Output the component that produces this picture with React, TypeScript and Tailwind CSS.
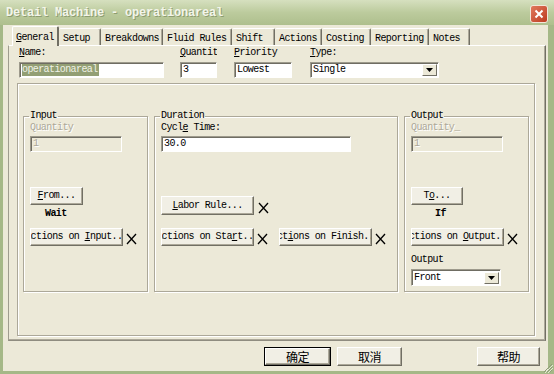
import React from "react";

const mono = "font-['Liberation_Mono',monospace] text-[10px] tracking-[-0.6px] leading-[12px]";
const cjk = "font-['Noto_Sans_CJK_SC',sans-serif] text-[12px]";

const tabs = [
  { label: "General", w: "w-[47px]", u: 0, active: true },
  { label: "Setup", w: "w-[42px]", u: 0 },
  { label: "Breakdowns", w: "w-[62px]", u: 0 },
  { label: "Fluid Rules", w: "w-[69px]", u: 0 },
  { label: "Shift", w: "w-[43px]", u: 2 },
  { label: "Actions", w: "w-[47px]", u: 0 },
  { label: "Costing", w: "w-[49px]", u: 0 },
  { label: "Reporting", w: "w-[58px]", u: 0 },
  { label: "Notes", w: "w-[41px]", u: 0 },
];

function Ul({ text, at }: { text: string; at: number }) {
  return (
    <>
      {text.slice(0, at)}
      <span className="underline underline-offset-[1px]">{text[at]}</span>
      {text.slice(at + 1)}
    </>
  );
}

function Field({
  className,
  children,
  disabled,
}: {
  className: string;
  children?: React.ReactNode;
  disabled?: boolean;
}) {
  return (
    <div
      className={`h-[16px] flex items-center pl-[2px] border border-t-[#9d9a8c] border-l-[#9d9a8c] border-b-white border-r-white shadow-[inset_1px_1px_0_#6f6d63] overflow-hidden ${
        disabled ? "bg-[#ece9d8] text-[#aca899]" : "bg-white text-black"
      } ${className}`}
    >
      {children}
    </div>
  );
}

function Select({ className, value }: { className: string; value: string }) {
  return (
    <Field className={`pr-[1px] ${className}`}>
      <span className="flex-1">{value}</span>
      <div className="w-[15px] h-[12px] flex items-center justify-center bg-[#ece9d8] border border-t-white border-l-white border-b-[#716f64] border-r-[#716f64]">
        <svg width="7" height="4" viewBox="0 0 7 4">
          <path d="M0 0h7L3.5 4z" fill="#000" />
        </svg>
      </div>
    </Field>
  );
}

function Btn({
  className,
  children,
}: {
  className: string;
  children: React.ReactNode;
}) {
  return (
    <div
      className={`flex items-center justify-center whitespace-nowrap overflow-hidden bg-[#f1efe5] border border-t-white border-l-white border-b-[#716f64] border-r-[#716f64] shadow-[inset_-1px_-1px_0_#aca899] ${className}`}
    >
      <span className="whitespace-pre">{children}</span>
    </div>
  );
}

function XMark() {
  return (
    <svg width="11" height="12" viewBox="0 0 11 12" className="mb-[1px]">
      <path d="M1 1l9 10M10 1L1 11" stroke="#000" strokeWidth="1.3" />
    </svg>
  );
}

function Group({
  title,
  className,
  children,
}: {
  title: string;
  className: string;
  children: React.ReactNode;
}) {
  return (
    <fieldset
      className={`h-[182px] border border-[#aca899] shadow-[1px_1px_0_#fff,inset_1px_1px_0_#fff] pl-[6px] ${className}`}
    >
      <legend className="px-[1px] -ml-[1px] text-black">{title}</legend>
      <div className="flex flex-col items-start">{children}</div>
    </fieldset>
  );
}

const dis = "text-[#aca899] [text-shadow:1px_1px_0_#fff]";

export default function App() {
  return (
    <div className={`relative w-[554px] h-[374px] flex flex-col bg-[#a5b887] ${mono}`}>
      {/* title bar */}
      <div className="h-[25px] flex items-center pl-[6px] pr-[6px] bg-linear-to-b from-[#d6e0bf] via-[#bccb9d] to-[#aebf8d]">
        <span className="font-bold text-[12px] tracking-[-0.2px] text-[#f3f5ea] [text-shadow:1px_1px_0_#8d9c70]">
          Detail Machine - operationareal
        </span>
        <div className="ml-auto mt-[2px] w-[18px] h-[18px] rounded-[3px] border border-[#f2e6da] bg-linear-to-br from-[#e0785c] to-[#bd3a1f] flex items-center justify-center">
          <svg width="10" height="10" viewBox="0 0 10 10">
            <path d="M1.5 1.5l7 7M8.5 1.5l-7 7" stroke="#fff" strokeWidth="2" />
          </svg>
        </div>
      </div>

      <div className="flex-1 flex flex-col ml-[3px] mr-[6px] mb-[3px] bg-[#ece9d8] text-black">
        {/* tabs */}
        <div className="relative z-10 h-[20px] flex items-end pl-[9px]">
          {tabs.map((t) =>
            t.active ? (
              <div
                key={t.label}
                className={`${t.w} h-[20px] -mb-[1px] pl-[3px] pt-[5px] bg-[#ece9d8] border-t border-l border-t-white border-l-white border-r-2 border-r-[#716f64] rounded-t-[2px]`}
              >
                <Ul text={t.label} at={t.u} />
              </div>
            ) : (
              <div
                key={t.label}
                className={`${t.w} h-[17px] pl-[4px] pt-[4px] border-t border-t-white border-r border-r-[#716f64] shadow-[inset_-1px_0_0_#aca899] rounded-t-[2px]`}
              >
                {t.label}
              </div>
            )
          )}
        </div>

        {/* tab panel */}
        <div className="ml-[5px] w-[538px] h-[296px] border border-t-white border-l-[#9f9c8f] border-b-[#8f8c80] border-r-[#716f64] shadow-[inset_-1px_-1px_0_#aca899]">
          <div className="flex pl-[10px] pt-[1px]">
            <div className="w-[145px] flex flex-col">
              <div className="h-[15px]"><Ul text="Name:" at={0} /></div>
              <Field className="w-[145px]">
                <span className="bg-[#939f74] text-[#f0f2e6] pr-[1px]">operationareal</span>
              </Field>
            </div>
            <div className="ml-[16px] w-[37px] flex flex-col">
              <div className="h-[15px] overflow-hidden whitespace-nowrap"><Ul text="Quantity" at={0} /></div>
              <Field className="w-[37px]">3</Field>
            </div>
            <div className="ml-[17px] w-[58px] flex flex-col">
              <div className="h-[15px] whitespace-nowrap"><Ul text="Priority" at={0} /></div>
              <Field className="w-[58px]">Lowest</Field>
            </div>
            <div className="ml-[18px] w-[129px] flex flex-col">
              <div className="h-[15px]"><Ul text="Type:" at={0} /></div>
              <Select className="w-[129px]" value="Single" />
            </div>
          </div>

          {/* inner box */}
          <div className="mt-[5px] ml-[8px] w-[518px] h-[253px] border border-[#aca899] shadow-[1px_1px_0_#fff,inset_1px_1px_0_#fff]">
            <div className="flex mt-[26px] ml-[5px] gap-[6px]">
              <Group title="Input" className="w-[125px]">
                <div className={`h-[12px] ${dis}`}>Quantity</div>
                <Field disabled className="mt-[2px] w-[92px]">
                  <span className="[text-shadow:1px_1px_0_#fff]">1</span>
                </Field>
                <Btn className="mt-[35px] w-[53px] h-[18px]">
                  <Ul text="From..." at={0} />
                </Btn>
                <div className="mt-[3px] ml-[15px] h-[12px] font-bold">Wait</div>
                <div className="mt-[8px] flex items-end gap-[3px]">
                  <Btn className="w-[93px] h-[18px]">
                    {"Actions on "}<Ul text="Input..." at={0} />
                  </Btn>
                  <XMark />
                </div>
              </Group>

              <Group title="Duration" className="w-[244px]">
                <div className="h-[12px]"><Ul text="Cycle Time:" at={4} /></div>
                <Field className="mt-[2px] w-[190px]">30.0</Field>
                <div className="mt-[44px] flex items-end gap-[4px]">
                  <Btn className="w-[93px] h-[19px]">
                    <Ul text="Labor Rule..." at={0} />
                  </Btn>
                  <XMark />
                </div>
                <div className="mt-[13px] flex items-end">
                  <Btn className="w-[93px] h-[18px]">
                    {"Actions on "}<Ul text="Start..." at={3} />
                  </Btn>
                  <div className="ml-[3px]"><XMark /></div>
                  <Btn className="ml-[11px] w-[93px] h-[18px]">
                    {"Act"}<Ul text="ions on Finish..." at={0} />
                  </Btn>
                  <div className="ml-[3px]"><XMark /></div>
                </div>
              </Group>

              <Group title="Output" className="w-[125px]">
                <div className={`h-[12px] ${dis}`}>Quantity_</div>
                <Field disabled className="mt-[2px] w-[92px]">
                  <span className="[text-shadow:1px_1px_0_#fff]">1</span>
                </Field>
                <Btn className="mt-[35px] w-[52px] h-[18px]">
                  <Ul text="To..." at={1} />
                </Btn>
                <div className="mt-[3px] ml-[24px] h-[12px] font-bold">If</div>
                <div className="mt-[8px] flex items-end gap-[3px]">
                  <Btn className="w-[93px] h-[18px]">
                    {"Actions on "}<Ul text="Output..." at={0} />
                  </Btn>
                  <XMark />
                </div>
                <div className="mt-[8px] h-[12px]">Output</div>
                <Select className="mt-[3px] w-[90px] h-[17px]" value="Front" />
              </Group>
            </div>
          </div>
        </div>

        {/* dialog buttons */}
        <div className={`flex mt-[6px] pl-[261px] pr-[8px] ${cjk}`}>
          <div className="w-[67px] h-[19px] border border-black">
            <Btn className="w-full h-full">确定</Btn>
          </div>
          <Btn className="ml-[6px] w-[65px] h-[19px]">取消</Btn>
          <Btn className="ml-auto w-[63px] h-[19px]">帮助</Btn>
        </div>
      </div>

      {/* size grip */}
      <svg width="12" height="12" viewBox="0 0 12 12" className="absolute right-[1px] bottom-[1px]">
        <path d="M11 3L3 11M11 6L6 11M11 9L9 11" stroke="#8f9c78" strokeWidth="1" />
        <path d="M12 4L4 12M12 7L7 12" stroke="#e3ead3" strokeWidth="1" />
      </svg>
    </div>
  );
}
